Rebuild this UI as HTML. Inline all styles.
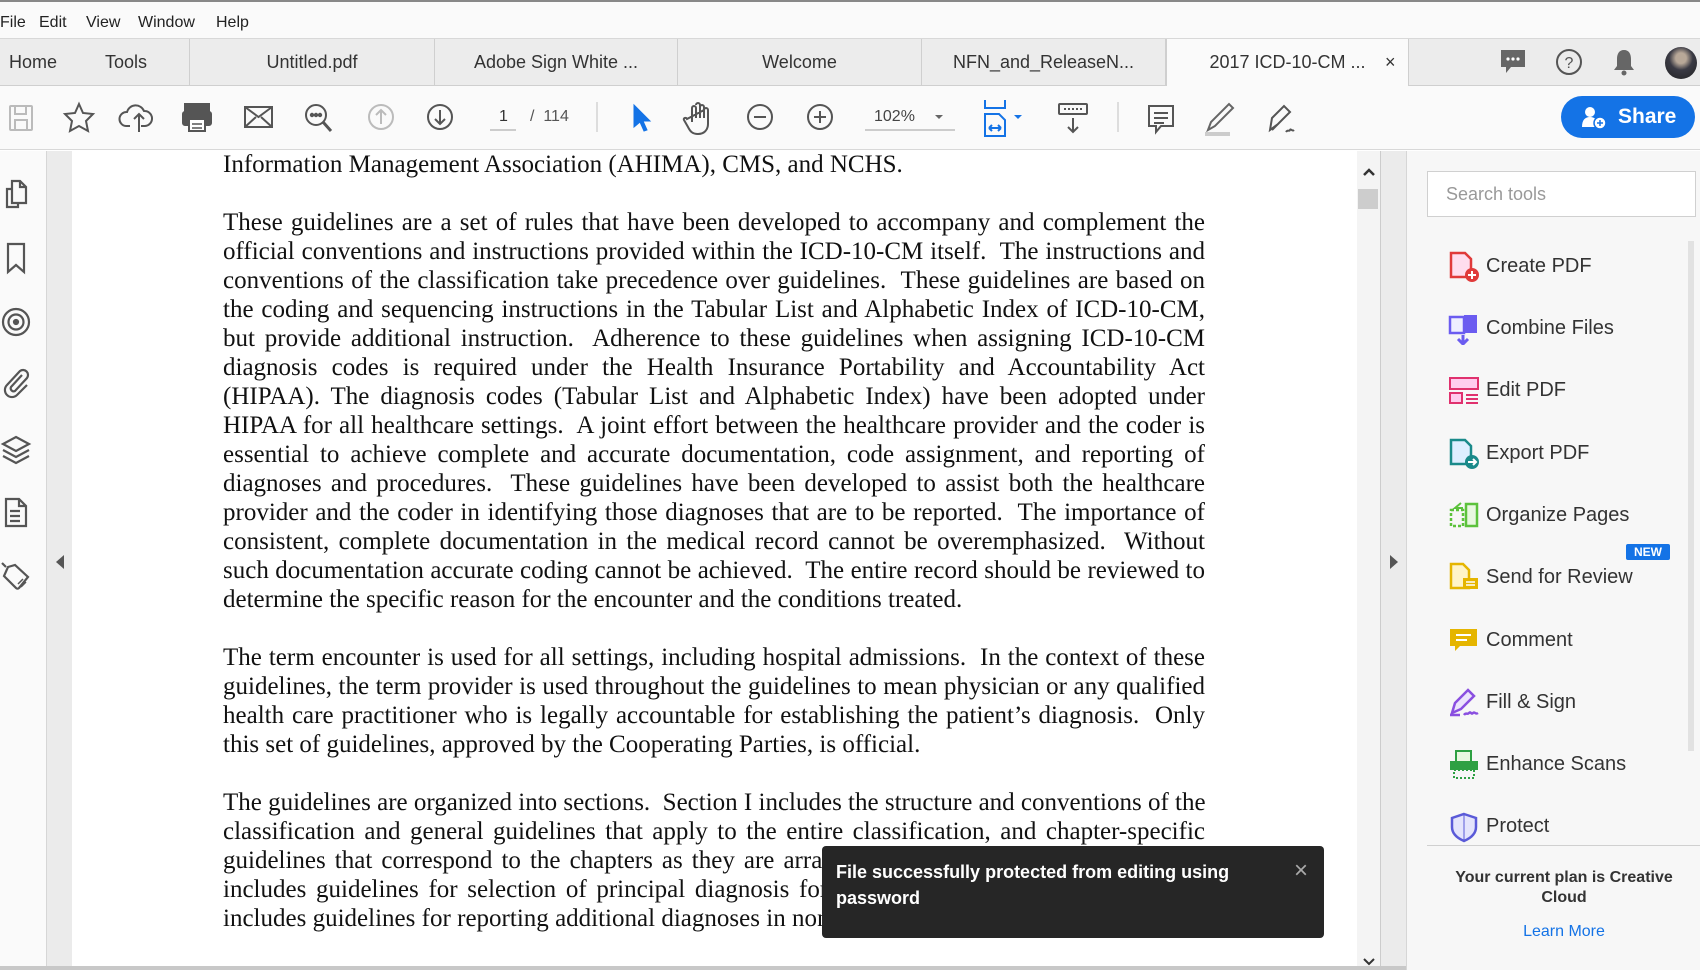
<!DOCTYPE html>
<html><head><meta charset="utf-8">
<style>
*{margin:0;padding:0;box-sizing:border-box}
body{width:1700px;height:970px;overflow:hidden;background:#fff;font-family:"Liberation Sans",sans-serif;position:relative;color:#333}
.abs{position:absolute}
#menu{left:0;top:0;width:1700px;height:38px;background:#fafafa;border-top:2px solid #888;font-size:16px;color:#222}
#menu span{position:absolute;top:12px}
#tabs{left:0;top:38px;width:1700px;height:48px;background:#ececec;border-top:1px solid #d8d8d8;border-bottom:1px solid #cfcfcf}
.tab{position:absolute;top:0;height:47px;border-right:1px solid #cfcfcf;font-size:18px;line-height:46px;text-align:center;color:#333}
#tool{left:0;top:86px;width:1700px;height:64px;background:#fafafa;border-bottom:1px solid #d8d8d8}
#side{left:0;top:151px;width:47px;height:819px;background:#fafafa;border-right:1px solid #d6d6d6}
#strip{left:47px;top:151px;width:25px;height:819px;background:#ebebeb}
#doc{left:223px;top:150px;width:982px;font-family:"Liberation Serif",serif;font-size:25px;line-height:29px;color:#111}
#doc div{text-align:justify;text-align-last:justify;white-space:nowrap}
#doc div.l{text-align-last:left}
#doc .g{height:29px}
#panel{left:1406px;top:151px;width:294px;height:819px;background:#f7f7f7;border-left:1px solid #d6d6d6}
.item{position:absolute;left:79px;font-size:20px;color:#333}
.ic{position:absolute;left:-38px;top:-4px}
</style></head><body>
<div id="menu" class="abs"><span style="left:0">File</span><span style="left:39px">Edit</span><span style="left:86px">View</span><span style="left:138px">Window</span><span style="left:216px">Help</span></div>
<div id="tabs" class="abs">
<div class="tab" style="left:0;width:190px;text-align:left"><span style="position:absolute;left:9px">Home</span><span style="position:absolute;left:105px">Tools</span></div>
<div class="tab" style="left:190px;width:245px">Untitled.pdf</div>
<div class="tab" style="left:435px;width:243px">Adobe Sign White ...</div>
<div class="tab" style="left:678px;width:244px">Welcome</div>
<div class="tab" style="left:922px;width:244px">NFN_and_ReleaseN...</div>
<div class="tab" style="left:1166px;width:243px;background:#fafafa;height:48px;border-left:1px solid #cfcfcf">2017 ICD-10-CM ... <span style="position:absolute;left:218px;font-size:18px">×</span></div>
<svg style="position:absolute;left:1498px;top:8px" width="30" height="30"><path d="M3 3h24v17H13l-5 6v-6H3z" fill="#666"/><circle cx="10" cy="12" r="1.6" fill="#fff"/><circle cx="15" cy="12" r="1.6" fill="#fff"/><circle cx="20" cy="12" r="1.6" fill="#fff"/></svg>
<svg style="position:absolute;left:1554px;top:8px" width="30" height="30"><circle cx="15" cy="15" r="12" fill="none" stroke="#555" stroke-width="2"/><text x="15" y="21" font-size="16" text-anchor="middle" fill="#555" font-family="Liberation Sans">?</text></svg>
<svg style="position:absolute;left:1609px;top:8px" width="30" height="30"><path d="M15 3c-5 0-7 4-7 9v7l-3 4h20l-3-4v-7c0-5-2-9-7-9z" fill="#666"/><circle cx="15" cy="26" r="2.5" fill="#666"/></svg>
<div style="position:absolute;left:1665px;top:8px;width:32px;height:32px;border-radius:50%;background:radial-gradient(circle at 50% 35%,#b8a898 0 20%,#3a3a44 45%,#222 100%)"></div>
</div>
<div id="tool" class="abs">
<svg width="1400" height="64" style="position:absolute;left:0;top:0" fill="none" stroke="#555" stroke-width="2">
<g stroke="#bbb"><rect x="10" y="20" width="22" height="24" rx="1"/><rect x="15" y="20" width="11" height="8"/><rect x="15" y="34" width="12" height="10"/></g>
<path d="M79 18l4 9 10 1-7 7 2 10-9-5-9 5 2-10-7-7 10-1z"/>
<path d="M130 40h-4a7 7 0 0 1 1-14 9 9 0 0 1 17-1 7 7 0 0 1 1 15h-4M139 46V28m-5 5 5-5 5 5"/>
<g><rect x="185" y="18" width="24" height="8" fill="#555"/><rect x="183" y="26" width="28" height="13" rx="2" fill="#555"/><rect x="189" y="33" width="16" height="12" fill="#fff"/><path d="M192 38h10M192 42h10" stroke-width="1.5"/></g>
<g><rect x="245" y="21" width="27" height="20"/><path d="M245 21l13.5 10L272 21M245 41l11-10M272 41l-11-10"/></g>
<g><circle cx="316" cy="29" r="10"/><path d="M323 36l8 9" stroke-width="3"/><circle cx="312" cy="29" r="1.2" fill="#555"/><circle cx="316" cy="29" r="1.2" fill="#555"/><circle cx="320" cy="29" r="1.2" fill="#555"/></g>
<g stroke="#bbb"><circle cx="381" cy="31" r="12"/><path d="M381 38V24m-5 5 5-5 5 5"/></g>
<g><circle cx="440" cy="31" r="12"/><path d="M440 24v14m-5-5 5 5 5-5"/></g>
<path d="M490 44h26" stroke="#ccc"/>
<path d="M597 16v30" stroke="#ddd"/>
<path d="M634 19v22l6-5 4 9 3-1-4-9h7z" fill="#1473e6" stroke="#1473e6" stroke-width="1"/>
<path d="M692 36v-14a2 2 0 0 1 4 0v10m0-13a2 2 0 0 1 4 0v13m0-11a2 2 0 0 1 4 0v11m0-8a2 2 0 0 1 4 0v14c0 6-4 10-10 10s-8-3-10-7l-4-7c-1-2 2-3 3-1z"/>
<g><circle cx="760" cy="31" r="12"/><path d="M754 31h12"/></g>
<g><circle cx="820" cy="31" r="12"/><path d="M814 31h12M820 25v12"/></g>
<path d="M865 44h90" stroke="#ccc"/>
<path d="M935 29l4 4 4-4z" fill="#666" stroke="none"/>
<g stroke="#1473e6"><path d="M985 14v8h20v-8M985 50V28h14l6 6v16zM989 42h12M989 42l3-3M989 42l3 3M1001 42l-3-3M1001 42l-3 3"/><path d="M1014 29l4 4 4-4z" fill="#1473e6" stroke="none"/></g>
<g><rect x="1059" y="18" width="28" height="10" rx="1"/><path d="M1064 23h18" stroke-dasharray="2 2"/><path d="M1073 32v14m-5-5 5 5 5-5"/></g>
<path d="M1118 16v30" stroke="#ddd"/>
<path d="M1149 20h24v20h-12l-5 6v-6h-7zM1154 27h14M1154 32h14M1154 37h10"/>
<path d="M1208 44l3-8 18-18 4 4-18 18zM1205 48h25" stroke="#666"/><path d="M1205 48h25" stroke="#ccc" stroke-width="4"/>
<path d="M1270 44l2-12 12-12 6 6-12 12zM1272 44l7-7M1286 46c2-3 3 0 4-2s2 2 4 0"/>
</svg>
<span style="position:absolute;left:499px;top:22px;font-size:16px">1</span>
<span style="position:absolute;left:530px;top:22px;font-size:16px;color:#555">/ &nbsp;114</span>
<span style="position:absolute;left:874px;top:22px;font-size:16px;color:#444">102%</span>
<div style="position:absolute;left:1561px;top:10px;width:134px;height:42px;border-radius:21px;background:#1473e6;color:#fff;font-size:21px;font-weight:bold;line-height:42px;padding-left:57px">Share
<svg style="position:absolute;left:20px;top:9px" width="28" height="26"><circle cx="9" cy="7" r="5" fill="#fff"/><path d="M1 22c0-7 3-10 8-10s8 3 8 10z" fill="#fff"/><circle cx="19" cy="18" r="6" fill="#fff" stroke="#1473e6" stroke-width="1.5"/><path d="M19 15v6M16 18h6" stroke="#1473e6" stroke-width="1.5"/></svg></div>
</div>
<div id="side" class="abs">
<svg width="47" height="460" fill="none" stroke="#555" stroke-width="2.2">
<g transform="translate(16,44)"><path d="M-9 4v-10h5M-4 -14h8l6 6v16H-4zM4 -14v6h6M-9 4v8h11v-4"/></g>
<g transform="translate(16,107)"><path d="M-8 -14v28l8-7 8 7v-28z"/></g>
<g transform="translate(16,171)"><circle r="13"/><circle r="7.5"/><circle r="2" fill="#555"/></g>
<g transform="translate(16,232)"><path d="M6 -8l-11 12a3 3 0 0 0 4 4l12-13a5 5 0 0 0-7-7l-13 14a7 7 0 0 0 10 10l10-10"/></g>
<g transform="translate(16,299)"><path d="M0 -13l13 7-13 7-13-7zM-13 0l13 7 13-7M-13 6l13 7 13-7"/></g>
<g transform="translate(16,361)"><path d="M-10 -13h13l7 7v20h-20zM3 -13v7h7M-6 -1h10M-6 4h10M-6 9h10"/></g>
<g transform="translate(16,426)"><path d="M-14 -14l4 4M-8 -10l7 -2 13 12-9 11a2 2 0 0 1-3 0l-12-12z"/><path d="M2 7l5-5M5 10l5-5" stroke-width="1.5"/></g>
</svg></div>
<div id="strip" class="abs"><svg style="position:absolute;left:8px;top:404px" width="10" height="14"><path d="M9 0v14L1 7z" fill="#555"/></svg></div>
<div class="abs" style="left:1357px;top:151px;width:24px;height:819px;background:#f4f4f4;border-right:1px solid #ccc">
<svg style="position:absolute;left:6px;top:16px" width="12" height="10"><path d="M1 8l5-5 5 5" stroke="#333" stroke-width="2.5" fill="none"/></svg>
<div style="position:absolute;left:1px;top:38px;width:20px;height:20px;background:#cdcdcd"></div>
<svg style="position:absolute;left:6px;top:806px" width="12" height="10"><path d="M1 2l5 5 5-5" stroke="#333" stroke-width="2" fill="none"/></svg></div>
<div class="abs" style="left:1381px;top:151px;width:25px;height:819px;background:#ebebeb"><svg style="position:absolute;left:8px;top:404px" width="10" height="14"><path d="M1 0v14l8-7z" fill="#555"/></svg></div>
<div class="abs" style="left:0;top:966px;width:1700px;height:4px;background:#c8c8c8"></div>

<div id="doc" class="abs">
<div class="l">Information Management Association (AHIMA), CMS, and NCHS.</div>
<div class="g"></div>
<div>These guidelines are a set of rules that have been developed to accompany and complement the</div>
<div>official conventions and instructions provided within the ICD-10-CM itself.&nbsp; The instructions and</div>
<div>conventions of the classification take precedence over guidelines.&nbsp; These guidelines are based on</div>
<div>the coding and sequencing instructions in the Tabular List and Alphabetic Index of ICD-10-CM,</div>
<div>but provide additional instruction.&nbsp; Adherence to these guidelines when assigning ICD-10-CM</div>
<div>diagnosis codes is required under the Health Insurance Portability and Accountability Act</div>
<div>(HIPAA). The diagnosis codes (Tabular List and Alphabetic Index) have been adopted under</div>
<div>HIPAA for all healthcare settings.&nbsp; A joint effort between the healthcare provider and the coder is</div>
<div>essential to achieve complete and accurate documentation, code assignment, and reporting of</div>
<div>diagnoses and procedures.&nbsp; These guidelines have been developed to assist both the healthcare</div>
<div>provider and the coder in identifying those diagnoses that are to be reported.&nbsp; The importance of</div>
<div>consistent, complete documentation in the medical record cannot be overemphasized.&nbsp; Without</div>
<div>such documentation accurate coding cannot be achieved.&nbsp; The entire record should be reviewed to</div>
<div class="l">determine the specific reason for the encounter and the conditions treated.</div>
<div class="g"></div>
<div>The term encounter is used for all settings, including hospital admissions.&nbsp; In the context of these</div>
<div>guidelines, the term provider is used throughout the guidelines to mean physician or any qualified</div>
<div>health care practitioner who is legally accountable for establishing the patient’s diagnosis.&nbsp; Only</div>
<div class="l">this set of guidelines, approved by the Cooperating Parties, is official.</div>
<div class="g"></div>
<div>The guidelines are organized into sections.&nbsp; Section I includes the structure and conventions of the</div>
<div>classification and general guidelines that apply to the entire classification, and chapter-specific</div>
<div>guidelines that correspond to the chapters as they are arranged in the classification.&nbsp; Section II</div>
<div>includes guidelines for selection of principal diagnosis for non-outpatient settings.&nbsp; Section III</div>
<div>includes guidelines for reporting additional diagnoses in non-outpatient settings.&nbsp; Section IV is for</div>
</div>

<div class="abs" style="left:822px;top:846px;width:502px;height:92px;background:#262626;border-radius:4px;color:#fff;font-size:18px;font-weight:bold;line-height:26px;padding:13px 14px">File successfully protected from editing using<br>password
<span style="position:absolute;right:16px;top:12px;font-weight:normal;font-size:24px;color:#aaa">×</span></div>

<div id="panel" class="abs">
<div style="position:absolute;left:20px;top:20px;width:269px;height:46px;border:1px solid #d0d0d0;background:#fff;font-size:18px;color:#999;padding:12px 18px">Search tools</div>
<div style="position:absolute;right:6px;top:90px;width:6px;height:510px;background:#e2e2e2"></div>
<div class="item" style="top:104px"><svg class="ic" width="32" height="32"><path d="M3 2h14l6 6v18H3z" fill="#fde" stroke="#e03a3a" stroke-width="2.5"/><circle cx="24" cy="24" r="7" fill="#e03a3a"/><path d="M24 20v8M20 24h8" stroke="#fff" stroke-width="2"/></svg>Create PDF</div>
<div class="item" style="top:166px"><svg class="ic" width="32" height="32"><rect x="2" y="4" width="14" height="16" fill="#eef" stroke="#6b5cf0" stroke-width="2.5"/><rect x="16" y="2" width="13" height="18" fill="#6b5cf0"/><path d="M15 22v8m-5-4 5 5 5-5" stroke="#6b5cf0" stroke-width="3" fill="none"/></svg>Combine Files</div>
<div class="item" style="top:228px"><svg class="ic" width="32" height="32"><rect x="2" y="3" width="28" height="11" fill="#fce" stroke="#e0316e" stroke-width="2"/><rect x="2" y="18" width="12" height="10" fill="#fce" stroke="#e0316e" stroke-width="2"/><path d="M18 20h12M18 24h12M18 28h12" stroke="#e0316e" stroke-width="2"/></svg>Edit PDF</div>
<div class="item" style="top:291px"><svg class="ic" width="32" height="32"><path d="M3 2h14l6 6v18H3z" fill="#def" stroke="#1a8a8a" stroke-width="2.5"/><circle cx="24" cy="24" r="7" fill="#1a8a8a"/><path d="M20 24h8m-3-3 3 3-3 3" stroke="#fff" stroke-width="2" fill="none"/></svg>Export PDF</div>
<div class="item" style="top:353px"><svg class="ic" width="32" height="32"><rect x="3" y="10" width="12" height="16" fill="none" stroke="#5cc23c" stroke-width="2.5" stroke-dasharray="3 2"/><rect x="18" y="4" width="11" height="22" fill="#e8f8e0" stroke="#5cc23c" stroke-width="2.5"/><path d="M13 3 7 8h8" stroke="#5cc23c" stroke-width="2" fill="none"/></svg>Organize Pages</div>
<div class="item" style="top:415px"><svg class="ic" width="32" height="32"><path d="M3 2h12l6 6v18H3z" fill="#fff4c8" stroke="#e5b500" stroke-width="2.5"/><rect x="15" y="16" width="15" height="11" fill="#e5b500"/><path d="M18 20h9M18 23h9" stroke="#fff" stroke-width="1.5"/></svg>Send for Review
<span style="position:absolute;left:140px;top:-22px;background:#1473e6;color:#fff;font-size:12px;font-weight:bold;padding:1px 8px;border-radius:2px">NEW</span></div>
<div class="item" style="top:478px"><svg class="ic" width="32" height="32"><path d="M2 4h27v17H12l-5 5v-5H2z" fill="#e5b500"/><path d="M8 10h15M8 15h11" stroke="#fff" stroke-width="2"/></svg>Comment</div>
<div class="item" style="top:540px"><svg class="ic" width="32" height="32"><path d="M4 26l3-10L20 3l6 6L13 22z" fill="#ece4fc" stroke="#8a4fe0" stroke-width="2.5"/><path d="M2 28h10M16 28c2-3 3 0 5-2s2 2 4 0 2 2 5 0" stroke="#8a4fe0" stroke-width="2.5" fill="none"/></svg>Fill &amp; Sign</div>
<div class="item" style="top:602px"><svg class="ic" width="32" height="32"><rect x="8" y="2" width="15" height="12" fill="#e8f8e0" stroke="#2ea043" stroke-width="2"/><rect x="2" y="12" width="28" height="9" fill="#2ea043"/><rect x="6" y="21" width="20" height="8" fill="none" stroke="#2ea043" stroke-width="2" stroke-dasharray="2 2"/></svg>Enhance Scans</div>
<div class="item" style="top:664px"><svg class="ic" width="32" height="32"><path d="M16 3l12 4v9c0 7-5 11-12 14C9 27 4 23 4 16V7z" fill="#e4e4fc" stroke="#5a5ad8" stroke-width="2.5"/><path d="M16 3v27" stroke="#5a5ad8" stroke-width="1"/></svg>Protect</div>
<div style="position:absolute;left:20px;top:694px;width:274px;height:125px;background:#f7f7f7;border-top:1px solid #d0d0d0;text-align:center;font-size:16px;font-weight:bold;color:#333;line-height:20px;padding-top:22px">Your current plan is Creative<br>Cloud
<div style="font-weight:normal;color:#1473e6;font-size:16px;margin-top:14px">Learn More</div></div>
</div>
</body></html>
